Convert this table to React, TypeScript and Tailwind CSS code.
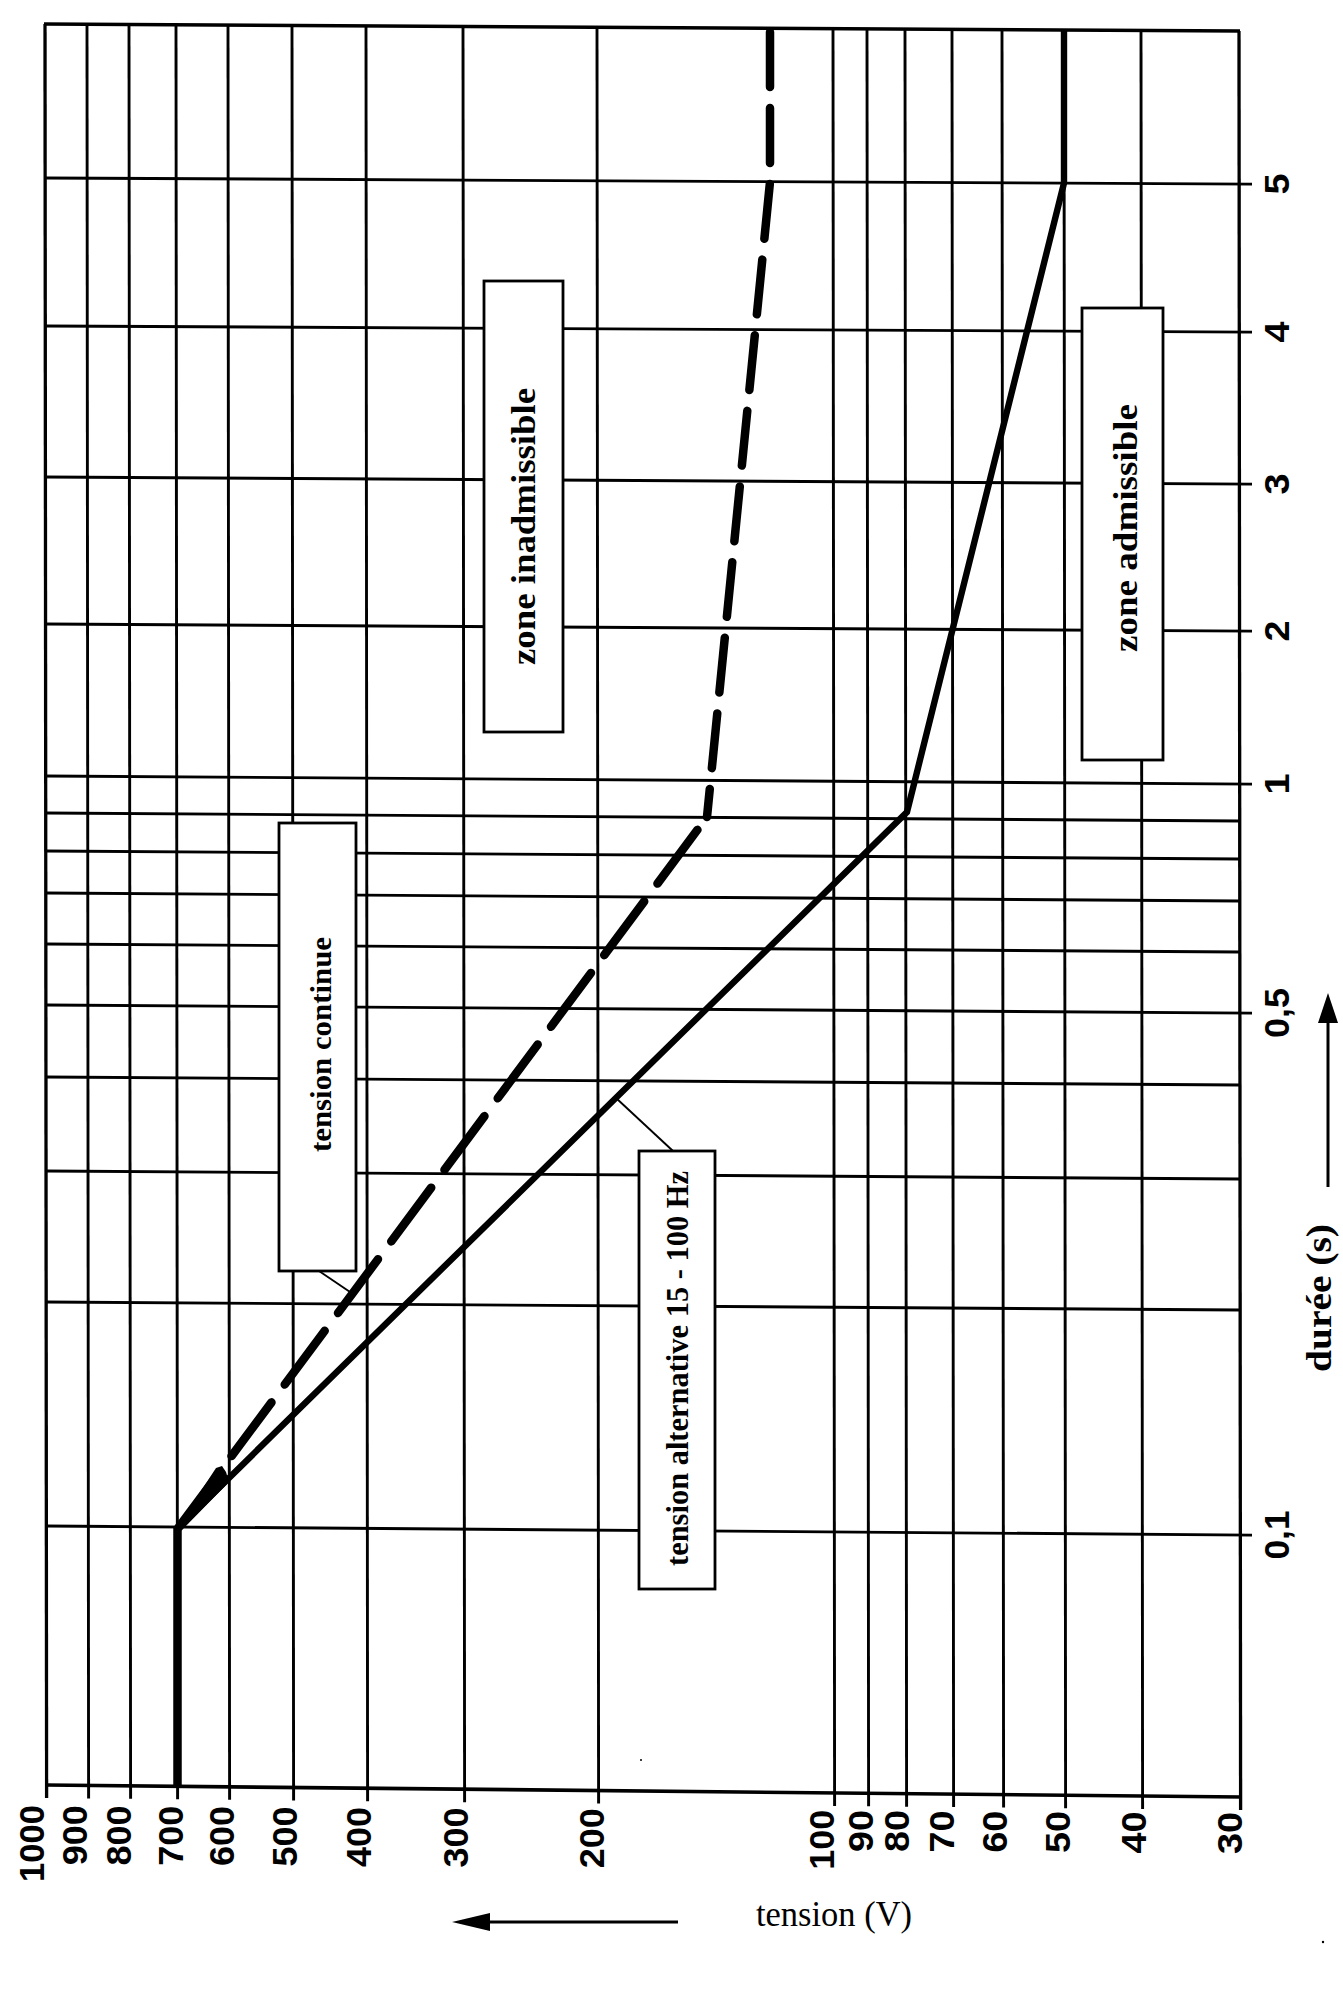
import React from 'react';

// voltage grid (log scale), x measured at the top edge of the frame
const VLINES = [45, 87, 129, 176, 228, 292, 366, 463, 597, 833, 867, 905, 952, 1002, 1064, 1141, 1239];

const VOLTS: [string, number][] = [
  ['1000', 32], ['900', 75], ['800', 119], ['700', 170], ['600', 222], ['500', 285],
  ['400', 359], ['300', 456], ['200', 592], ['100', 822], ['90', 861], ['80', 897],
  ['70', 942], ['60', 995], ['50', 1058], ['40', 1134], ['30', 1230],
];

const DIGIT_LEN: Record<number, number> = { 1: 21, 2: 42, 3: 60, 4: 77 };

// time grid: y at left frame / y at right frame (the scan is slightly skewed)
const ROWS: { l: number; r: number; label?: string; len?: number }[] = [
  { l: 178, r: 184, label: '5', len: 21 },
  { l: 326, r: 332, label: '4', len: 21 },
  { l: 477, r: 484, label: '3', len: 21 },
  { l: 624, r: 631, label: '2', len: 21 },
  { l: 776, r: 784, label: '1', len: 21 },
  { l: 813, r: 821 },
  { l: 851, r: 859 },
  { l: 893, r: 901 },
  { l: 944, r: 952 },
  { l: 1005, r: 1013, label: '0,5', len: 50 },
  { l: 1077, r: 1085 },
  { l: 1171, r: 1179 },
  { l: 1302, r: 1310 },
  { l: 1526, r: 1535, label: '0,1', len: 49 },
];

const topY = (x: number) => 24 + (7 * (x - 45)) / 1194;
const botY = (x: number) => 1785 + (12 * (x - 45)) / 1195;
const leftX = (y: number) => 45 + (1.5 * (y - 24)) / 1761;
const rightX = (y: number) => 1239 + (1.5 * (y - 24)) / 1761;

const SANS = 'Liberation Sans, Arial, sans-serif';
const SERIF = 'Liberation Serif, Times New Roman, serif';

type BoxProps = { x: number; y: number; w: number; h: number; tx: number; ty: number; len: number; size: number; text: string };

const LabelBox = ({ x, y, w, h, tx, ty, len, size, text }: BoxProps) => (
  <g>
    <rect x={x} y={y} width={w} height={h} fill="#fff" stroke="#000" strokeWidth={2.8} />
    <text
      x={tx}
      y={ty}
      transform={`rotate(-90 ${tx} ${ty})`}
      fontFamily={SERIF}
      fontWeight="bold"
      fontSize={size}
      textLength={len}
      lengthAdjust="spacingAndGlyphs"
      fill="#000"
    >
      {text}
    </text>
  </g>
);

export default function App() {
  return (
    <div className="w-[1343px] h-[1994px] bg-white overflow-hidden">
      <svg width={1343} height={1994} viewBox="0 0 1343 1994" className="block">
        {/* horizontal grid (durée) */}
        {ROWS.map((row, i) => {
          const x1 = leftX(row.l);
          const x2 = row.label ? 1252 : rightX(row.r);
          const y2 = row.label ? row.r + 0.1 : row.r;
          return <line key={`h${i}`} x1={x1} y1={row.l} x2={x2} y2={y2} stroke="#000" strokeWidth={2.9} />;
        })}

        {/* vertical grid (tension) with ticks under the frame */}
        {VLINES.map((x, i) => (
          <line
            key={`v${i}`}
            x1={x}
            y1={topY(x)}
            x2={x + 1.6}
            y2={botY(x) + 13}
            stroke="#000"
            strokeWidth={i === 0 || i === VLINES.length - 1 ? 3.3 : 2.9}
          />
        ))}

        {/* frame */}
        <line x1={44} y1={24} x2={1240} y2={31} stroke="#000" strokeWidth={3.6} />
        <line x1={46} y1={1785} x2={1241.5} y2={1797} stroke="#000" strokeWidth={3.6} />

        {/* labelled boxes */}
        <LabelBox x={484} y={281} w={79} h={451} tx={535} ty={665} len={277} size={33} text="zone inadmissible" />
        <LabelBox x={1082} y={308} w={81} h={452} tx={1137} ty={652} len={248} size={33} text="zone admissible" />
        <LabelBox x={279} y={823} w={77} h={448} tx={331} ty={1152} len={215} size={30} text="tension continue" />
        <LabelBox x={639} y={1151} w={76} h={438} tx={688} ty={1566} len={395} size={31} text="tension alternative 15 - 100 Hz" />

        {/* leader lines */}
        <line x1={319} y1={1271} x2={353} y2={1294} stroke="#000" strokeWidth={1.9} />
        <line x1={616} y1={1098} x2={673} y2={1151} stroke="#000" strokeWidth={1.9} />

        {/* tension alternative : solid curve */}
        <line x1={177.5} y1={1788} x2={177.5} y2={1527} stroke="#000" strokeWidth={8.5} />
        <polyline
          points="178,1528 907,812 1064,183 1064,29"
          fill="none"
          stroke="#000"
          strokeWidth={6.4}
          strokeLinejoin="miter"
        />

        {/* tension continue : dashed curve */}
        <path
          d="M770 28 L770 182 L707 817"
          fill="none"
          stroke="#000"
          strokeWidth={8.5}
          strokeLinecap="round"
          strokeDasharray="55 21"
          strokeDashoffset={72}
        />
        <path
          d="M707 817 L178 1528"
          fill="none"
          stroke="#000"
          strokeWidth={8.5}
          strokeLinecap="round"
          strokeDasharray="67 22.2"
          strokeDashoffset={73.2}
        />
        <polygon points="174,1532 216,1468 222,1466 226,1472 229,1482 182,1530" fill="#000" />

        {/* tension axis labels */}
        {VOLTS.map(([t, cx]) => {
          const bx = cx + 12.5;
          const by = 1805 + (cx - 45) * 0.006;
          return (
            <text
              key={t}
              x={bx}
              y={by}
              transform={`rotate(-90 ${bx} ${by})`}
              textAnchor="end"
              fontFamily={SANS}
              fontWeight="bold"
              fontSize={35}
              textLength={DIGIT_LEN[t.length]}
              lengthAdjust="spacingAndGlyphs"
              fill="#000"
            >
              {t}
            </text>
          );
        })}

        {/* durée axis labels */}
        {ROWS.filter((r) => r.label).map((row) => (
          <text
            key={row.label}
            x={1289}
            y={row.r}
            transform={`rotate(-90 1289 ${row.r})`}
            textAnchor="middle"
            fontFamily={SANS}
            fontWeight="bold"
            fontSize={35}
            textLength={row.len}
            lengthAdjust="spacingAndGlyphs"
            fill="#000"
          >
            {row.label}
          </text>
        ))}

        {/* axis titles and arrows */}
        <line x1={484} y1={1922} x2={678} y2={1922} stroke="#000" strokeWidth={3} />
        <polygon points="452,1922 490,1913 490,1931" fill="#000" />
        <text x={756} y={1926} fontFamily={SERIF} fontSize={36} textLength={156} lengthAdjust="spacingAndGlyphs" fill="#000">
          tension (V)
        </text>

        <line x1={1328} y1={1187} x2={1328} y2={1018} stroke="#000" strokeWidth={3} />
        <polygon points="1328,993 1318,1023 1338,1023" fill="#000" />
        <text
          x={1331}
          y={1372}
          transform="rotate(-90 1331 1372)"
          fontFamily={SERIF}
          fontWeight="bold"
          fontSize={35}
          textLength={148}
          lengthAdjust="spacingAndGlyphs"
          fill="#000"
        >
          durée (s)
        </text>

        {/* scan specks */}
        <circle cx={641} cy={1760} r={1} fill="#000" />
        <circle cx={1323} cy={1942} r={1.2} fill="#000" />
      </svg>
    </div>
  );
}
